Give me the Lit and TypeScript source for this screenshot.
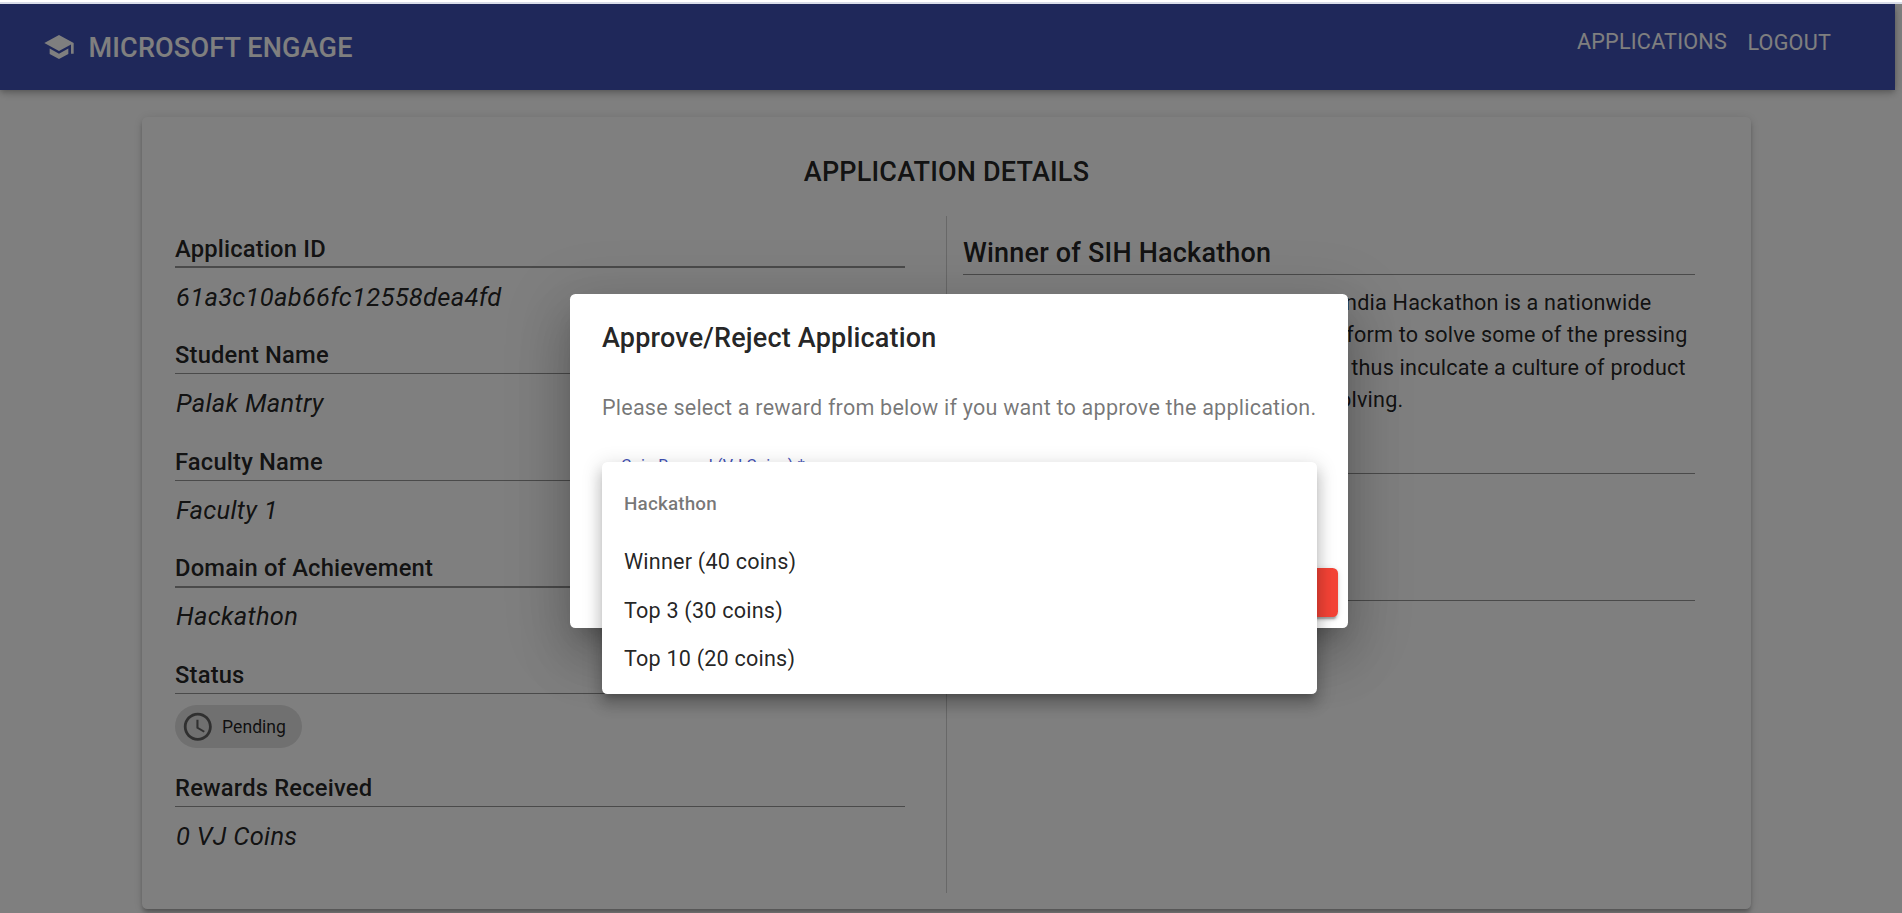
import { LitElement, html, css } from "lit";
import { customElement } from "lit/decorators.js";

interface Field {
  label: string;
  value: string;
  chip?: boolean;
}

const FIELDS: Field[] = [
  { label: "Application ID", value: "61a3c10ab66fc12558dea4fd" },
  { label: "Student Name", value: "Palak Mantry" },
  { label: "Faculty Name", value: "Faculty 1" },
  { label: "Domain of Achievement", value: "Hackathon" },
  { label: "Status", value: "Pending", chip: true },
  { label: "Rewards Received", value: "0 VJ Coins" },
];

const REWARDS = ["Winner (40 coins)", "Top 3 (30 coins)", "Top 10 (20 coins)"];

@customElement("site-header")
class SiteHeader extends LitElement {
  static styles = css`
    :host {
      display: block;
    }
    .bar {
      box-sizing: border-box;
      height: 86px;
      padding: 0 64px 0 43px;
      background: #3f51b5;
      color: #fff;
      display: flex;
      align-items: center;
      box-shadow: 0 2.7px 5.4px -1.35px rgba(0, 0, 0, 0.2),
        0 5.4px 6.75px 0 rgba(0, 0, 0, 0.14), 0 1.35px 13.5px 0 rgba(0, 0, 0, 0.12);
    }
    svg {
      width: 32px;
      height: 32px;
      fill: currentColor;
      margin-right: 13.5px;
    }
    .brand {
      flex: 1;
      font-size: 27px;
      font-weight: 500;
      letter-spacing: 0.0065em;
      line-height: 40px;
      padding-top: 2px;
    }
    nav {
      display: flex;
      gap: 20.5px;
      font-size: 21.6px;
      letter-spacing: 0.0098em;
      line-height: 32px;
      padding-bottom: 11px;
    }
    .lower {
      padding-top: 1px;
      margin-bottom: -1px;
    }
  `;
  render() {
    return html`<div class="bar">
      <svg viewBox="0 0 24 24">
        <path d="M5 13.18v4L12 21l7-3.82v-4L12 17l-7-3.82zM12 3L1 9l11 6 9-4.91V17h2V9L12 3z" />
      </svg>
      <div class="brand">MICROSOFT ENGAGE</div>
      <nav><span>APPLICATIONS</span><span class="lower">LOGOUT</span></nav>
    </div>`;
  }
}

@customElement("application-card")
class ApplicationCard extends LitElement {
  static styles = css`
    :host {
      display: block;
    }
    .card {
      box-sizing: border-box;
      height: 792px;
      padding: 34px 56px 16px 33px;
      background: #fff;
      color: rgba(0, 0, 0, 0.87);
      border-radius: 5.4px;
      box-shadow: 0 4px 4px -2.7px rgba(0, 0, 0, 0.2), 0 4px 5.4px 0 rgba(0, 0, 0, 0.14),
        0 1.35px 10.8px 0 rgba(0, 0, 0, 0.12);
      display: flex;
      flex-direction: column;
    }
    h2 {
      margin: 0 -23px 0 0;
      height: 65px;
      line-height: 43px;
      font-size: 27px;
      font-weight: 500;
      letter-spacing: 0.0068em;
      text-align: center;
    }
    .body {
      flex: 1;
      display: flex;
    }
    .left {
      width: 730px;
      margin-right: 41px;
      padding-top: 17.4px;
    }
    .split {
      width: 1px;
      background: rgba(0, 0, 0, 0.18);
    }
    .right {
      flex: 1;
      margin-left: 16px;
      padding-top: 19px;
    }
    .label {
      box-sizing: border-box;
      padding-top: 0.2px;
      font-size: 23.76px;
      font-weight: 500;
      letter-spacing: 0.0075em;
      line-height: 31px;
      height: 33px;
    }
    .rule {
      height: 1.35px;
      background: rgba(0, 0, 0, 0.42);
    }
    .value {
      font-size: 25.5px;
      font-style: italic;
      letter-spacing: 0.0115em;
      line-height: 38px;
      padding: 9.78px 0 24.52px 1px;
    }
    .chip {
      box-sizing: border-box;
      width: 127px;
      height: 43.2px;
      margin: 10.8px 0 24.85px;
      padding-left: 5.5px;
      border-radius: 21.6px;
      background: #e0e0e0;
      display: flex;
      align-items: center;
      gap: 8px;
      font-size: 17.6px;
      line-height: 26px;
    }
    .chip svg {
      width: 33.6px;
      height: 33.6px;
      fill: #616161;
    }
    h3 {
      margin: 0;
      height: 39px;
      line-height: 36px;
      font-size: 27px;
      font-weight: 500;
      letter-spacing: 0.0075em;
    }
    .text {
      margin: 11.5px 0 56.5px;
      font-size: 21.6px;
      letter-spacing: 0.00938em;
      line-height: 32.4px;
      white-space: nowrap;
    }
    .lead {
      display: inline-block;
      width: 311px;
    }
    .slot {
      height: 125.5px;
    }
  `;
  render() {
    return html`<section class="card">
      <h2>APPLICATION DETAILS</h2>
      <div class="body">
        <div class="left">
          ${FIELDS.map(
            (f) => html`<div class="label">${f.label}</div>
              <div class="rule"></div>
              ${f.chip
                ? html`<div class="chip">
                    <svg viewBox="0 0 24 24">
                      <path
                        d="M11.99 2C6.47 2 2 6.48 2 12s4.47 10 9.99 10C17.52 22 22 17.52 22 12S17.52 2 11.99 2zM12 20c-4.42 0-8-3.58-8-8s3.58-8 8-8 8 3.58 8 8-3.58 8-8 8z"
                      />
                      <path d="M12.5 7H11v6l5.25 3.15.75-1.23-4.5-2.67z" />
                    </svg>
                    <span>${f.value}</span>
                  </div>`
                : html`<div class="value">${f.value}</div>`}`
          )}
        </div>
        <div class="split"></div>
        <div class="right">
          <h3>Winner of SIH Hackathon</h3>
          <div class="rule"></div>
          <p class="text">
            <span class="lead">Our team was a winner in</span>Smart India Hackathon is a nationwide<br />
            initiative to provide students with a platform to solve some of the pressing<br />
            problems we face in our daily lives, and thus inculcate a culture of product<br />
            innovation and a mindset of problem-solving.
          </p>
          <div class="rule"></div>
          <div class="slot"></div>
          <div class="rule"></div>
        </div>
      </div>
    </section>`;
  }
}

@customElement("review-dialog")
class ReviewDialog extends LitElement {
  static styles = css`
    :host {
      display: block;
      color: rgba(0, 0, 0, 0.87);
    }
    .dialog {
      position: relative;
      box-sizing: border-box;
      width: 778px;
      height: 334px;
      padding: 22.6px 10px 11px 32px;
      border-radius: 5.4px;
      background: #fff;
      display: flex;
      flex-direction: column;
      box-shadow: 0 15px 20px -9.5px rgba(0, 0, 0, 0.2), 0 32px 51px 4px rgba(0, 0, 0, 0.14),
        0 12px 62px 11px rgba(0, 0, 0, 0.12);
    }
    h2 {
      margin: 0;
      font-size: 27px;
      font-weight: 500;
      letter-spacing: 0.0068em;
      line-height: 43.2px;
    }
    p {
      margin: 32.4px 0 0;
      font-size: 21.6px;
      letter-spacing: 0.0092em;
      line-height: 32.4px;
      color: rgba(0, 0, 0, 0.54);
      white-space: nowrap;
    }
    .caption {
      padding-left: 19px;
      margin-top: 30.4px;
      font-size: 16.2px;
      letter-spacing: 0.0065em;
      line-height: 22px;
      color: #3f51b5;
    }
    .actions {
      margin-top: auto;
      display: flex;
      justify-content: flex-end;
    }
    .reject {
      height: 49px;
      padding: 0 22.5px;
      border-radius: 5.4px;
      background: #f44336;
      color: #fff;
      font-size: 18.9px;
      font-weight: 500;
      line-height: 49px;
      box-shadow: 0 4px 1.35px -2.7px rgba(0, 0, 0, 0.2), 0 2.7px 2.7px 0 rgba(0, 0, 0, 0.14),
        0 1.35px 6.75px 0 rgba(0, 0, 0, 0.12);
    }
    .menu {
      position: absolute;
      left: 32px;
      top: 168px;
      box-sizing: border-box;
      width: 715px;
      height: 232px;
      padding: 10.8px 0;
      border-radius: 5.4px;
      background: #fff;
      box-shadow: 0 6.75px 6.75px -4px rgba(0, 0, 0, 0.2), 0 10.8px 13.5px 1.35px rgba(0, 0, 0, 0.14),
        0 4px 19px 2.7px rgba(0, 0, 0, 0.12);
    }
    .group,
    .item {
      padding: 0 22px;
    }
    .group {
      height: 65.4px;
      line-height: 62px;
      font-size: 18.9px;
      font-weight: 500;
      letter-spacing: 0.008em;
      color: rgba(0, 0, 0, 0.54);
    }
    .item {
      font-size: 21.6px;
      letter-spacing: 0.00938em;
      line-height: 48.6px;
    }
  `;
  render() {
    return html`<div class="dialog">
      <h2>Approve/Reject Application</h2>
      <p>Please select a reward from below if you want to approve the application.</p>
      <div class="caption">Coin Reward (VJ Coins) *</div>
      <div class="actions"><div class="reject">REJECT</div></div>
      <div class="menu">
        <div class="group">Hackathon</div>
        ${REWARDS.map((r) => html`<div class="item">${r}</div>`)}
      </div>
    </div>`;
  }
}

@customElement("app-root")
class AppRoot extends LitElement {
  static styles = css`
    :host {
      display: block;
      height: 913px;
      overflow: hidden;
      font-family: Roboto, "Liberation Sans", sans-serif;
      background: #fff;
    }
    .edge {
      height: 2px;
      margin-top: 2px;
      background: #d9dde9;
    }
    .top {
      display: flow-root;
    }
    .page {
      position: relative;
      height: 909px;
      overflow: hidden;
    }
    .header {
      display: block;
      width: 1895px;
    }
    .card {
      width: 1609px;
      margin: 27px 0 0 142px;
    }
    .backdrop {
      position: absolute;
      inset: 0;
      background: rgba(0, 0, 0, 0.5);
    }
    .dialog {
      position: absolute;
      left: 570px;
      top: 290px;
    }
  `;
  render() {
    return html`<div class="top"><div class="edge"></div></div>
      <div class="page">
        <site-header class="header"></site-header>
        <application-card class="card"></application-card>
        <div class="backdrop"></div>
        <review-dialog class="dialog"></review-dialog>
      </div>`;
  }
}
